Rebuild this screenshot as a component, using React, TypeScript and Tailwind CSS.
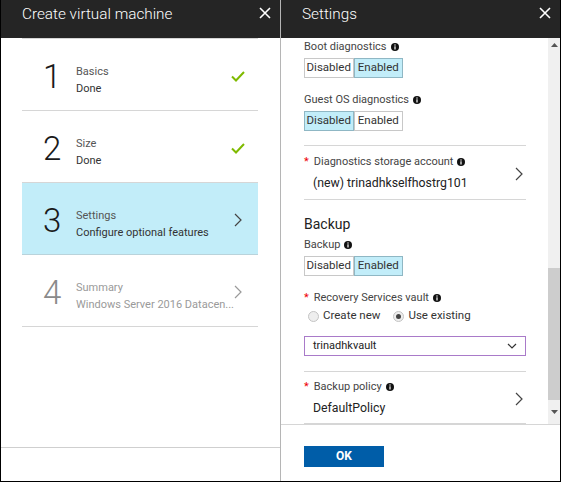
import React from 'react';

const font = { fontFamily: 'Roboto, Lato, sans-serif' };

function CloseIcon() {
  return (
    <svg width="12" height="12" viewBox="0 0 12 12" className="text-white">
      <path d="M1 1L11 11M11 1L1 11" stroke="currentColor" strokeWidth="1.6" />
    </svg>
  );
}

function Check() {
  return (
    <svg width="14" height="11" viewBox="0 0 14 11">
      <path d="M1 5.5L5 9.5L13 1" fill="none" stroke="#7fba00" strokeWidth="2" />
    </svg>
  );
}

function Chevron({ color = '#444' }: { color?: string }) {
  return (
    <svg width="8" height="14" viewBox="0 0 8 14">
      <path d="M1 1L7 7L1 13" fill="none" stroke={color} strokeWidth="1.2" />
    </svg>
  );
}

function Info() {
  return (
    <svg width="8" height="8" viewBox="0 0 8 8" className="ml-[4px] inline-block">
      <circle cx="4" cy="4" r="4" fill="#111" />
      <rect x="3.4" y="3.3" width="1.2" height="3.2" fill="#fff" />
      <rect x="3.4" y="1.4" width="1.2" height="1.2" fill="#fff" />
    </svg>
  );
}

function Toggle({ on }: { on: 'Disabled' | 'Enabled' }) {
  return (
    <div className="flex h-[20px] w-[99px] text-[11.5px] text-[#333]">
      {(['Disabled', 'Enabled'] as const).map((o) => (
        <div
          key={o}
          className={
            'flex flex-1 items-center justify-center border ' +
            (o === on ? 'border-[#8fb7c4] bg-[#c2edf9]' : 'border-[#c8c8c8] bg-white')
          }
        >
          {o}
        </div>
      ))}
    </div>
  );
}

function Label({ text, required }: { text: string; required?: boolean }) {
  return (
    <div className="flex h-[16px] items-center text-[11px] text-[#444]">
      {required && <span className="mr-[5px] text-[#e00]">*</span>}
      <span>{text}</span>
      <Info />
    </div>
  );
}

function Step({
  n,
  title,
  sub,
  done,
  active,
  disabled,
}: {
  n: string;
  title: string;
  sub: string;
  done?: boolean;
  active?: boolean;
  disabled?: boolean;
}) {
  return (
    <div
      className={
        'flex h-[72px] items-center border-b ' +
        (active ? 'border-[#b9d3db] bg-[#c2edf9]' : 'border-[#d6d6d6]')
      }
    >
      <div
        className={
          'mt-[4px] w-[54px] pl-[21px] text-[33px] font-light leading-none ' +
          (disabled ? 'text-[#8a8a8a]' : 'text-[#1a1a1a]')
        }
      >
        {n}
      </div>
      <div className="mt-[10px] min-w-0 flex-1 whitespace-nowrap">
        <div className={'text-[11px] leading-[17px] ' + (disabled ? 'text-[#9a9a9a]' : 'text-[#555]')}>
          {title}
        </div>
        <div className={'text-[11px] leading-[17px] ' + (disabled ? 'text-[#9a9a9a]' : 'text-[#333]')}>
          {sub}
        </div>
      </div>
      <div className="mt-[3px] flex w-[36px] justify-center pr-[4px]">
        {done ? <Check /> : <Chevron color={disabled ? '#9a9a9a' : '#444'} />}
      </div>
    </div>
  );
}

function Header({ title }: { title: string }) {
  return (
    <div className="flex h-[38px] shrink-0 items-start justify-between bg-[#252525] pl-[21px] pr-[9px]">
      <span className="pt-[4px] text-[15.3px] font-light leading-[20px] text-white">{title}</span>
      <div className="pt-[7px]">
        <CloseIcon />
      </div>
    </div>
  );
}

export default function App() {
  return (
    <div
      className="flex h-[482px] w-[561px] overflow-hidden border-b border-l border-r border-black bg-white"
      style={font}
    >
      {/* Left blade */}
      <div className="flex w-[279px] flex-col">
        <Header title="Create virtual machine" />
        <div className="flex-1 px-[21px] pr-[22px]">
          <div className="border-t border-[#d6d6d6]">
            <Step n="1" title="Basics" sub="Done" done />
            <Step n="2" title="Size" sub="Done" done />
            <Step n="3" title="Settings" sub="Configure optional features" active />
            <Step n="4" title="Summary" sub="Windows Server 2016 Datacen..." disabled />
          </div>
        </div>
        <div className="h-[34px] border-t border-[#cfcfcf]" />
      </div>

      <div className="w-px bg-[#b5b5b5]" />

      {/* Right blade */}
      <div className="flex flex-1 flex-col">
        <Header title="Settings" />
        <div className="flex h-[387px] border-b border-[#d6d6d6]">
          <div className="flex-1 overflow-hidden pl-[23px] pr-[22px] pt-[1px]">
            <Label text="Boot diagnostics" />
            <div className="mt-[3px]">
              <Toggle on="Enabled" />
            </div>
            <div className="mt-[14px]">
              <Label text="Guest OS diagnostics" />
            </div>
            <div className="mt-[3px]">
              <Toggle on="Disabled" />
            </div>
            <div className="mt-[14px] border-t border-[#d6d6d6]" />

            <div className="mt-[8px] flex items-center">
              <div className="flex-1">
                <Label text="Diagnostics storage account" required />
                <div className="mt-[3px] h-[20px] pl-[9px] text-[12.3px] leading-[20px] text-[#222]">
                  (new) trinadhkselfhostrg101
                </div>
              </div>
              <div className="pr-[3px]">
                <Chevron />
              </div>
            </div>
            <div className="mt-[6px] border-t border-[#d6d6d6]" />

            <div className="mt-[13px] h-[22px] text-[14px] leading-[22px] text-[#222]">Backup</div>
            <div className="mt-[2px]">
              <Label text="Backup" />
            </div>
            <div className="mt-[3px]">
              <Toggle on="Enabled" />
            </div>

            <div className="mt-[14px]">
              <Label text="Recovery Services vault" required />
            </div>
            <div className="mt-[2px] flex h-[16px] items-center pl-[4px] text-[11.5px] text-[#333]">
              <span className="h-[11px] w-[11px] rounded-full border border-[#c4c4c4] bg-[#eee]" />
              <span className="ml-[4px]">Create new</span>
              <span className="ml-[13px] flex h-[11px] w-[11px] items-center justify-center rounded-full border border-[#c4c4c4] bg-[#eee]">
                <span className="h-[5px] w-[5px] rounded-full bg-[#444]" />
              </span>
              <span className="ml-[4px]">Use existing</span>
            </div>
            <div className="mt-[12px] flex h-[20px] items-center justify-between border border-[#a97ac9] pl-[8px] pr-[8px] text-[11px] text-[#222]">
              <span>trinadhkvault</span>
              <svg width="10" height="6" viewBox="0 0 10 6">
                <path d="M1 1L5 5L9 1" fill="none" stroke="#333" strokeWidth="1.2" />
              </svg>
            </div>
            <div className="mt-[15px] border-t border-[#d6d6d6]" />

            <div className="mt-[7px] flex items-center">
              <div className="flex-1">
                <Label text="Backup policy" required />
                <div className="mt-[3px] h-[20px] pl-[9px] text-[12.3px] leading-[20px] text-[#222]">
                  DefaultPolicy
                </div>
              </div>
              <div className="pr-[3px]">
                <Chevron />
              </div>
            </div>
            <div className="mt-[5px] border-t border-[#d6d6d6]" />
          </div>

          {/* scrollbar */}
          <div className="flex w-[12px] flex-col bg-[#f0f0f0]">
            <div className="flex h-[14px] items-center justify-center">
              <svg width="7" height="4" viewBox="0 0 7 4">
                <path d="M0 4L3.5 0L7 4Z" fill="#555" />
              </svg>
            </div>
            <div className="mt-[216px] h-[132px] bg-[#cdcdcd]" />
            <div className="flex flex-1 items-center justify-center">
              <svg width="7" height="4" viewBox="0 0 7 4">
                <path d="M0 0L3.5 4L7 0Z" fill="#555" />
              </svg>
            </div>
          </div>
        </div>

        <div className="flex-1 pl-[23px] pt-[18px]">
          <button className="h-[21px] w-[80px] bg-[#005da8] text-[12px] font-bold text-white">OK</button>
        </div>
      </div>
    </div>
  );
}
